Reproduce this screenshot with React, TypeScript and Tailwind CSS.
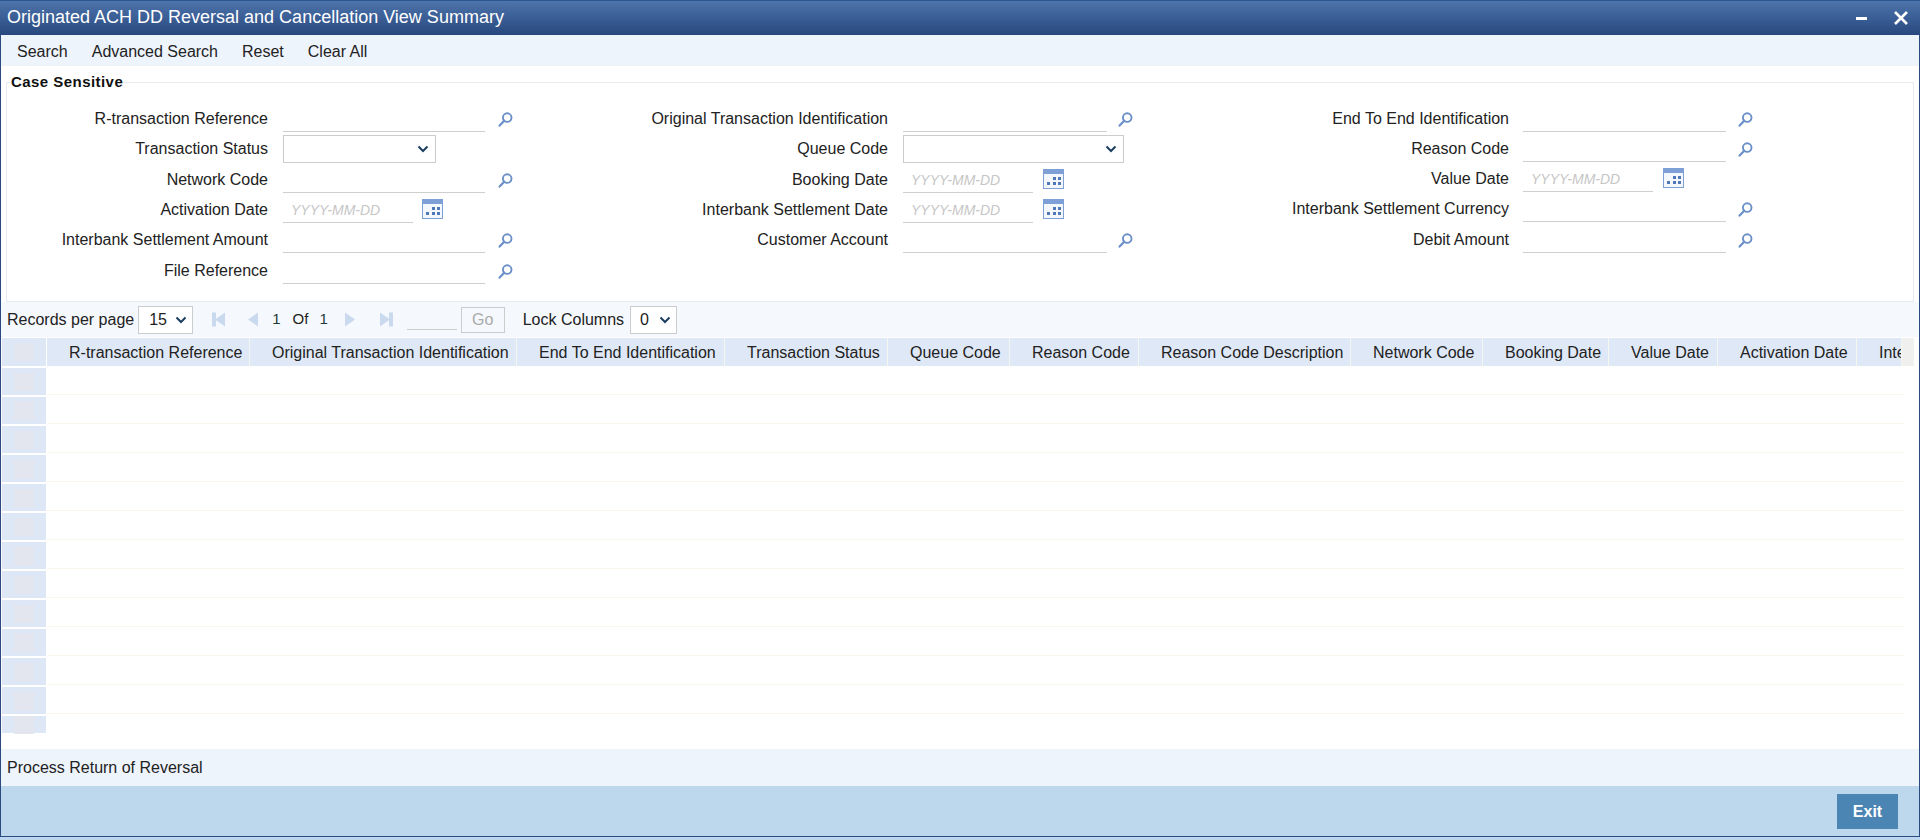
import React from "react";

type Kind = "lookup" | "date" | "select" | "selectWide";
type F = { label: string; kind: Kind };
type Spec = { input: string; icon: string; cal: string };

const col1: F[] = [
  { label: "R-transaction Reference", kind: "lookup" },
  { label: "Transaction Status", kind: "select" },
  { label: "Network Code", kind: "lookup" },
  { label: "Activation Date", kind: "date" },
  { label: "Interbank Settlement Amount", kind: "lookup" },
  { label: "File Reference", kind: "lookup" },
];
const col2: F[] = [
  { label: "Original Transaction Identification", kind: "lookup" },
  { label: "Queue Code", kind: "selectWide" },
  { label: "Booking Date", kind: "date" },
  { label: "Interbank Settlement Date", kind: "date" },
  { label: "Customer Account", kind: "lookup" },
];
const col3: F[] = [
  { label: "End To End Identification", kind: "lookup" },
  { label: "Reason Code", kind: "lookup" },
  { label: "Value Date", kind: "date" },
  { label: "Interbank Settlement Currency", kind: "lookup" },
  { label: "Debit Amount", kind: "lookup" },
];

const heightsA = ["h-[30px]", "h-[31px]", "h-[30px]", "h-[30px]", "h-[30px]", "h-[31px]"];
const heightsB = ["h-[30px]", "h-[30px]", "h-[30px]", "h-[30px]", "h-[31px]"];

const spec1: Spec = { input: "w-[202px]", icon: "ml-[13px]", cal: "ml-[9px]" };
const spec2: Spec = { input: "w-[204px]", icon: "ml-[11px]", cal: "ml-[10px]" };
const spec3: Spec = { input: "w-[203px]", icon: "ml-[12px]", cal: "ml-[10px]" };

const columns: { name: string; w: string }[] = [
  { name: "R-transaction Reference", w: "w-[203px]" },
  { name: "Original Transaction Identification", w: "w-[267px]" },
  { name: "End To End Identification", w: "w-[208px]" },
  { name: "Transaction Status", w: "w-[163px]" },
  { name: "Queue Code", w: "w-[122px]" },
  { name: "Reason Code", w: "w-[129px]" },
  { name: "Reason Code Description", w: "w-[212px]" },
  { name: "Network Code", w: "w-[132px]" },
  { name: "Booking Date", w: "w-[126px]" },
  { name: "Value Date", w: "w-[109px]" },
  { name: "Activation Date", w: "w-[139px]" },
  { name: "Interbank Settlement Date", w: "w-[45px]" },
];

function Magnifier() {
  return (
    <svg width="15" height="15" viewBox="0 0 15 15" fill="none" className="shrink-0">
      <circle cx="9.2" cy="5.6" r="4.3" stroke="#6b90c8" strokeWidth="1.9" />
      <path d="M6 8.9 L1.6 13.6" stroke="#6b90c8" strokeWidth="2.2" strokeLinecap="round" />
    </svg>
  );
}

function Calendar() {
  return (
    <svg width="21" height="20" viewBox="0 0 21 20" className="shrink-0">
      <rect x="0" y="0" width="21" height="20" fill="#7ea0d6" />
      <rect x="1" y="5" width="19" height="14" fill="#f4f7fc" />
      <rect x="10" y="8" width="3" height="3" fill="#4f78b8" />
      <rect x="15" y="8" width="3" height="3" fill="#4f78b8" />
      <rect x="4" y="13" width="3" height="3" fill="#4f78b8" />
      <rect x="10" y="13" width="3" height="3" fill="#4f78b8" />
      <rect x="15" y="13" width="3" height="3" fill="#4f78b8" />
    </svg>
  );
}

function Chevron() {
  return (
    <svg width="12" height="8" viewBox="0 0 12 8" fill="none" className="shrink-0">
      <path d="M1.5 1.5 L6 6 L10.5 1.5" stroke="#1c3f60" strokeWidth="2" />
    </svg>
  );
}

function Control({ kind, spec }: { kind: Kind; spec: Spec }) {
  if (kind === "lookup") {
    return (
      <>
        <input className={"h-[26px] border-b border-[#cfcfcf] bg-white outline-none " + spec.input} aria-label="value" />
        <span className={"mb-[5px] " + spec.icon}>
          <Magnifier />
        </span>
      </>
    );
  }
  if (kind === "date") {
    return (
      <>
        <input
          className="w-[130px] h-[26px] pl-[8px] border-b border-[#cfcfcf] bg-white outline-none italic text-[14px] placeholder:text-[#c6c6c6]"
          placeholder="YYYY-MM-DD"
        />
        <span className={"mb-[4px] " + spec.cal}>
          <Calendar />
        </span>
      </>
    );
  }
  return (
    <div
      className={
        "h-[28px] border border-[#cccccc] bg-white flex items-center justify-end pr-[6px] " +
        (kind === "select" ? "w-[153px]" : "w-[221px]")
      }
    >
      <Chevron />
    </div>
  );
}

function FormColumn({
  items,
  heights,
  labelW,
  gap,
  spec,
}: {
  items: F[];
  heights: string[];
  labelW: string;
  gap: string;
  spec: Spec;
}) {
  return (
    <div className="flex flex-col">
      {items.map((f, i) => (
        <div key={f.label} className={"flex items-end " + heights[i]}>
          <label
            className={
              "text-right leading-[20px] whitespace-nowrap " +
              (f.kind === "select" || f.kind === "selectWide" ? "pb-[4px] " : "pb-[3px] ") +
              labelW +
              " " +
              gap
            }
          >
            {f.label}
          </label>
          <Control kind={f.kind} spec={spec} />
        </div>
      ))}
    </div>
  );
}

function PageIcon({ dir, bar }: { dir: "l" | "r"; bar?: boolean }) {
  return (
    <svg width="13" height="15" viewBox="0 0 13 15" className="shrink-0">
      {dir === "l" ? (
        <>
          {bar && <rect x="0" y="0.5" width="4" height="14" fill="#c9d9ee" />}
          <path d="M13 0.5 V14.5 L3 7.5 Z" fill="#c9d9ee" />
        </>
      ) : (
        <>
          {bar && <rect x="9" y="0.5" width="4" height="14" fill="#c9d9ee" />}
          <path d="M0 0.5 V14.5 L10 7.5 Z" fill="#c9d9ee" />
        </>
      )}
    </svg>
  );
}

export default function App() {
  const rows = Array.from({ length: 13 }, (_, i) => i);
  return (
    <div className="w-[1924px] h-[840px] bg-white overflow-hidden font-['Liberation_Sans',Arial,sans-serif] text-[16px] text-[#222222]">
      <div className="w-[1920px] h-[837px] flex flex-col border-x border-b border-[#2a4a80]">
        {/* Title bar */}
        <div className="h-[35px] -mx-px shrink-0 flex items-center justify-between bg-gradient-to-b from-[#4d74ab] to-[#27487f] border-t border-[#2b5590] pl-[7px] pr-[11px]">
          <span className="text-white text-[18px] leading-[28px] pb-[2px] whitespace-nowrap">Originated ACH DD Reversal and Cancellation View Summary</span>
          <div className="flex items-center gap-[26px]">
            <span className="block w-[11px] h-[3px] bg-white" />
            <svg width="16" height="16" viewBox="0 0 16 16" fill="none">
              <path d="M2 2 L14 14 M14 2 L2 14" stroke="#ffffff" strokeWidth="2.6" />
            </svg>
          </div>
        </div>

        {/* Toolbar */}
        <div className="h-[31px] shrink-0 flex items-center gap-[24px] bg-[#eef4fc] pl-[16px] pt-[3px] border-b border-[#f0f2f5]">
          <span>Search</span>
          <span>Advanced Search</span>
          <span>Reset</span>
          <span>Clear All</span>
        </div>

        {/* Search criteria */}
        <fieldset className="mt-[6px] ml-[5px] w-[1908px] h-[230px] shrink-0 border border-[#e6e9ee] pt-[10px]">
          <legend className="ml-[4px] font-bold text-[15px] leading-[20px] tracking-[0.45px] text-[#111111]">Case Sensitive</legend>
          <div className="grid grid-cols-[633px_620px_1fr]">
            <FormColumn items={col1} heights={heightsA} labelW="w-[261px]" gap="mr-[15px]" spec={spec1} />
            <FormColumn items={col2} heights={heightsA} labelW="w-[248px]" gap="mr-[15px]" spec={spec2} />
            <FormColumn items={col3} heights={heightsB} labelW="w-[249px]" gap="mr-[14px]" spec={spec3} />
          </div>
        </fieldset>

        {/* Pagination */}
        <div className="h-[35px] shrink-0 flex items-center bg-[#f5f8fd] pl-[6px]">
          <span>Records per page</span>
          <div className="ml-[4px] w-[55px] h-[28px] border border-[#cccccc] bg-white flex items-center justify-between pl-[10px] pr-[5px]">
            <span>15</span>
            <Chevron />
          </div>
          <span className="ml-[19px]"><PageIcon dir="l" bar /></span>
          <span className="ml-[20px]"><PageIcon dir="l" /></span>
          <span className="ml-[14px] text-[15px] text-[#1f3a3a]">1</span>
          <span className="ml-[12px] text-[15px]">Of</span>
          <span className="ml-[11px] text-[15px] text-[#1f3a3a]">1</span>
          <span className="ml-[17px]"><PageIcon dir="r" /></span>
          <span className="ml-[22px]"><PageIcon dir="r" bar /></span>
          <span className="ml-[14px] w-[50px] h-[24px] border-b border-[#cfcfcf] self-start mt-[4px]" />
          <span className="ml-[4px] w-[44px] h-[26px] border border-[#cccccc] flex items-center justify-center text-[#aaaaaa]">Go</span>
          <span className="ml-[18px]">Lock Columns</span>
          <div className="ml-[6px] w-[47px] h-[28px] border border-[#cccccc] bg-white flex items-center justify-between pl-[9px] pr-[5px]">
            <span>0</span>
            <Chevron />
          </div>
        </div>

        {/* Table */}
        <div className="h-[412px] shrink-0 flex flex-col overflow-hidden pl-px">
          <div className="h-[29px] shrink-0 flex">
            <div className="w-[44px] shrink-0 mt-px mr-px bg-[#dde7f6] flex items-center justify-center">
              <span className="block w-[20px] h-[18px] bg-[#e3e6ee]" />
            </div>
            {columns.map((c) => (
              <div
                key={c.name}
                className={"shrink-0 mt-px pl-[22px] bg-[#dfe8f6] border-r border-[#f6f6f0] leading-[30px] whitespace-nowrap overflow-hidden last:border-r-0 " + c.w}
              >
                {c.name}
              </div>
            ))}
            <div className="w-[12px] shrink-0 mt-px bg-[#f0f1ef]" />
          </div>
          {rows.map((i) => (
            <div key={i} className={"shrink-0 flex " + (i === 12 ? "h-[19px]" : "h-[29px]")}>
              <div className="w-[44px] mr-px shrink-0 border-t-2 border-white bg-[#dde7f6] flex items-center justify-center">
                <span className="block w-[20px] h-[18px] bg-[#e3e6ee]" />
              </div>
              <div className={"w-[1857px] shrink-0 " + (i === 12 ? "" : "border-b border-[#fbf6ec]")} />
            </div>
          ))}
        </div>

        {/* Process band */}
        <div className="h-[37px] shrink-0 flex items-center bg-[#eef4fc] pl-[6px]">
          <span>Process Return of Reversal</span>
        </div>

        {/* Footer */}
        <div className="flex-1 flex justify-end items-start bg-[#bdd7ed] pt-[8px] pr-[21px]">
          <button className="w-[61px] h-[35px] bg-[#4a85b3] text-white font-bold text-[16px]">Exit</button>
        </div>
      </div>
      <div className="w-[1920px] h-[3px] bg-[#bdd7ed]" />
    </div>
  );
}
